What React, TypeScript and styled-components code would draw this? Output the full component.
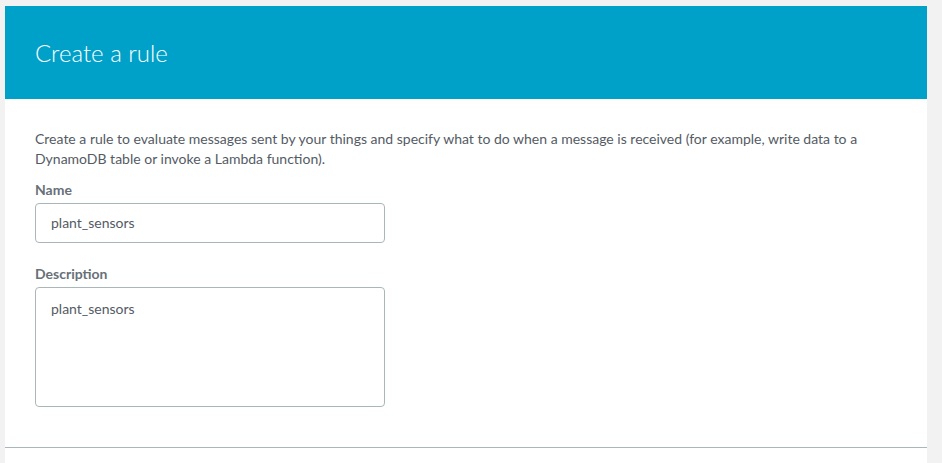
import React from 'react';
import styled, { createGlobalStyle } from 'styled-components';

const GlobalStyle = createGlobalStyle`
  html, body {
    margin: 0;
    padding: 0;
    background: #f2f2f2;
    font-family: Lato, "Liberation Sans", sans-serif;
  }
`;

const StyledPage = styled.div`
  padding: 6px 15px 0 5px;
  min-height: 457px;
`;

const StyledCard = styled.div`
  background: #ffffff;
  min-height: 457px;
  display: flex;
  flex-direction: column;
`;

const StyledHeader = styled.div`
  height: 93px;
  background: #00a1c9;
  display: flex;
  align-items: center;
  padding: 0 30px;
`;

const StyledTitle = styled.h1`
  margin: 0;
  font-size: 24px;
  font-weight: 300;
  color: #ffffff;
`;

const StyledBody = styled.div`
  padding: 30px 30px 40px;
  border-bottom: 1px solid #aab7b8;
`;

const StyledIntro = styled.p`
  margin: 0 0 11px;
  font-size: 14px;
  line-height: 20px;
  color: #545b64;
  max-width: 830px;
`;

const StyledField = styled.div`
  display: flex;
  flex-direction: column;
  margin-bottom: 21px;
  &:last-child {
    margin-bottom: 0;
  }
`;

const StyledLabel = styled.label`
  font-size: 14px;
  line-height: 20px;
  font-weight: 700;
  color: #687078;
  margin-bottom: 3px;
`;

const StyledInput = styled.div<{ $multiline?: boolean }>`
  box-sizing: border-box;
  width: 350px;
  height: ${(p) => (p.$multiline ? '120px' : '40px')};
  border: 1px solid #aab7b8;
  border-radius: 4px;
  padding: ${(p) => (p.$multiline ? '11px 15px' : '0 15px')};
  display: flex;
  align-items: ${(p) => (p.$multiline ? 'flex-start' : 'center')};
  font-size: 14px;
  line-height: 20px;
  color: #545b64;
`;

const StyledFooter = styled.div`
  flex: 1;
`;

export default function App() {
  return (
    <StyledPage>
      <GlobalStyle />
      <StyledCard>
        <StyledHeader>
          <StyledTitle>Create a rule</StyledTitle>
        </StyledHeader>
        <StyledBody>
          <StyledIntro>
            Create a rule to evaluate messages sent by your things and specify what to do when a message is received
            (for example, write data to a DynamoDB table or invoke a Lambda function).
          </StyledIntro>
          <StyledField>
            <StyledLabel>Name</StyledLabel>
            <StyledInput>plant_sensors</StyledInput>
          </StyledField>
          <StyledField>
            <StyledLabel>Description</StyledLabel>
            <StyledInput $multiline>plant_sensors</StyledInput>
          </StyledField>
        </StyledBody>
        <StyledFooter />
      </StyledCard>
    </StyledPage>
  );
}
